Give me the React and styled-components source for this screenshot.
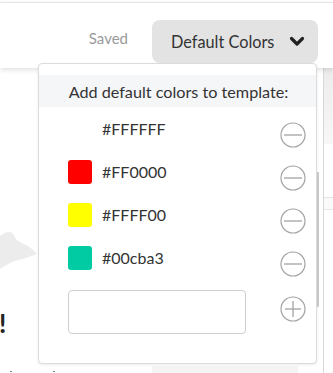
import React from "react";
import styled, { createGlobalStyle } from "styled-components";

const GlobalStyle = createGlobalStyle`
  html, body { margin: 0; padding: 0; background: #fff; }
  body { font-family: Lato, "Open Sans", sans-serif; overflow: hidden; }
  * { box-sizing: border-box; }
`;

const Page = styled.div`
  position: relative;
  width: 333px;
  height: 373px;
  overflow: hidden;
  display: flex;
  flex-direction: column;
  background: #fff;
`;

const Header = styled.header`
  position: relative;
  z-index: 1;
  height: 66px;
  flex: none;
  display: flex;
  align-items: center;
  justify-content: flex-end;
  padding: 17px 15px 6px 0;
  border-top: 1px solid #e6e6e6;
  margin-top: 2px;
  background: #fff;
  box-shadow: 0 2px 5px rgba(0, 0, 0, 0.12);
`;

const Saved = styled.span`
  font-size: 15px;
  color: #9a9a9a;
  margin: 0 24px 7px 0;
`;

const MenuButton = styled.button`
  width: 166px;
  height: 43px;
  border: none;
  border-radius: 8px;
  background: #e3e3e3;
  display: flex;
  align-items: center;
  padding: 0 13px 0 19px;
  font-family: inherit;
  font-size: 16.3px;
  color: #333;
  justify-content: space-between;
`;

const Body = styled.div`
  flex: 1;
  display: flex;
  min-height: 0;
`;

const Main = styled.main`
  flex: 1;
  display: flex;
  flex-direction: column;
  padding-top: 160px;
`;

const Blob = styled.svg`
  display: block;
  width: 40px;
  height: 42px;
`;

const Shout = styled.h1`
  margin: 38px 0 0 -1px;
  font-size: 26px;
  line-height: 30px;
  font-weight: 700;
  color: #222;
`;

const Footer = styled.div`
  margin-top: auto;
  height: 7px;
  display: flex;
  align-items: flex-start;
`;

const Dot = styled.span`
  width: 2px;
  height: 1px;
  margin-top: 5px;
  margin-left: ${(p) => p.$left}px;
  background: #777;
`;

const GreyBlock = styled.div`
  width: 146px;
  height: 7px;
  margin-left: 97px;
  background: #f4f4f4;
`;

const Scroll = styled.div`
  width: 3px;
  flex: none;
`;

const Thumb = styled.div`
  margin-top: 104px;
  height: 135px;
  background: #cbcbcb;
  border-radius: 1px;
`;

const Side = styled.aside`
  width: 10px;
  flex: none;
  margin-left: 4px;
  border-left: 1px solid #d8d8d8;
  display: flex;
  flex-direction: column;
`;

const SideBand = styled.div`
  height: 76px;
  background: linear-gradient(#ececec, #f7f7f7);
`;

const SideRule = styled.div`
  margin-top: 53px;
  border-top: 1px solid #e4e4e4;
  height: 13px;
  background: #fafafa;
  border-bottom: 1px solid #e8e8e8;
`;

const Dropdown = styled.div`
  position: absolute;
  z-index: 2;
  top: 63px;
  left: 38px;
  width: 279px;
  height: 301px;
  background: #fff;
  border: 1px solid #dcdcdc;
  border-radius: 4px;
  box-shadow: 0 1px 3px rgba(0, 0, 0, 0.08);
  padding-top: 11px;
`;

const DropTitle = styled.div`
  height: 32px;
  background: #f5f6f8;
  display: flex;
  align-items: center;
  justify-content: center;
  font-size: 16.2px;
  color: #333;
  padding-left: 2px;
`;

const List = styled.div`
  display: flex;
  flex-direction: column;
  gap: 19px;
  padding: 10px 10px 0 29px;
`;

const Row = styled.div`
  display: flex;
  align-items: flex-start;
  height: ${(p) => (p.$input ? 44 : 24)}px;
  margin-top: ${(p) => (p.$input ? 1 : 0)}px;
`;

const Swatch = styled.span`
  width: 24px;
  height: 24px;
  flex: none;
  border-radius: 3px;
  background: ${(p) => p.$color};
`;

const Hex = styled.span`
  flex: 1;
  margin-left: 10px;
  font-size: 16px;
  line-height: 24px;
  color: #333;
`;

const HexInput = styled.input`
  width: 178px;
  height: 44px;
  flex: none;
  border: 1px solid #cfcfcf;
  border-radius: 4px;
  background: #fff;
  margin-right: auto;
`;

const RoundIcon = styled.svg`
  width: 26px;
  height: 26px;
  flex: none;
  margin-top: ${(p) => p.$top}px;
  margin-left: ${(p) => p.$shift || 0}px;
`;

function Minus() {
  return (
    <RoundIcon viewBox="0 0 26 26" $top={5}>
      <circle cx="13" cy="13" r="12" fill="none" stroke="#a3a3a3" strokeWidth="1.2" />
      <line x1="4" y1="13" x2="22" y2="13" stroke="#a3a3a3" strokeWidth="1.3" />
    </RoundIcon>
  );
}

function Plus() {
  return (
    <RoundIcon viewBox="0 0 26 26" $top={6} $shift={1}>
      <circle cx="13" cy="13" r="12" fill="none" stroke="#a3a3a3" strokeWidth="1.2" />
      <line x1="5" y1="13" x2="21" y2="13" stroke="#a3a3a3" strokeWidth="1.3" />
      <line x1="13" y1="5" x2="13" y2="21" stroke="#a3a3a3" strokeWidth="1.3" />
    </RoundIcon>
  );
}

const colors = [
  { hex: "#FFFFFF", color: "#FFFFFF" },
  { hex: "#FF0000", color: "#FF0000" },
  { hex: "#FFFF00", color: "#FFFF00" },
  { hex: "#00cba3", color: "#00cba3" },
];

export default function App() {
  return (
    <>
      <GlobalStyle />
      <Page>
        <Header>
          <Saved>Saved</Saved>
          <MenuButton>
            <span>Default Colors</span>
            <svg width="16" height="11" viewBox="0 0 16 11">
              <polyline points="2.5,2.5 8,8 13.5,2.5" fill="none" stroke="#222" strokeWidth="3.2" strokeLinecap="round" strokeLinejoin="round" />
            </svg>
          </MenuButton>
        </Header>
        <Body>
          <Main>
            <Blob viewBox="0 0 40 42">
              <path d="M0 8 C6 3 12 3 14 7 C15 10 16 12 20 14 C27 17 33 21 37 26 C30 29 22 31 15 33 C9 35 4 38 0 41 Z" fill="#ececec" />
            </Blob>
            <Shout>!</Shout>
            <Footer>
              <Dot $left={10} />
              <Dot $left={41} />
              <GreyBlock />
            </Footer>
          </Main>
          <Scroll>
            <Thumb />
          </Scroll>
          <Side>
            <SideBand />
            <SideRule />
          </Side>
        </Body>
        <Dropdown>
          <DropTitle>Add default colors to template:</DropTitle>
          <List>
            {colors.map((c) => (
              <Row key={c.hex}>
                <Swatch $color={c.color} />
                <Hex>{c.hex}</Hex>
                <Minus />
              </Row>
            ))}
            <Row $input>
              <HexInput type="text" />
              <Plus />
            </Row>
          </List>
        </Dropdown>
      </Page>
    </>
  );
}
